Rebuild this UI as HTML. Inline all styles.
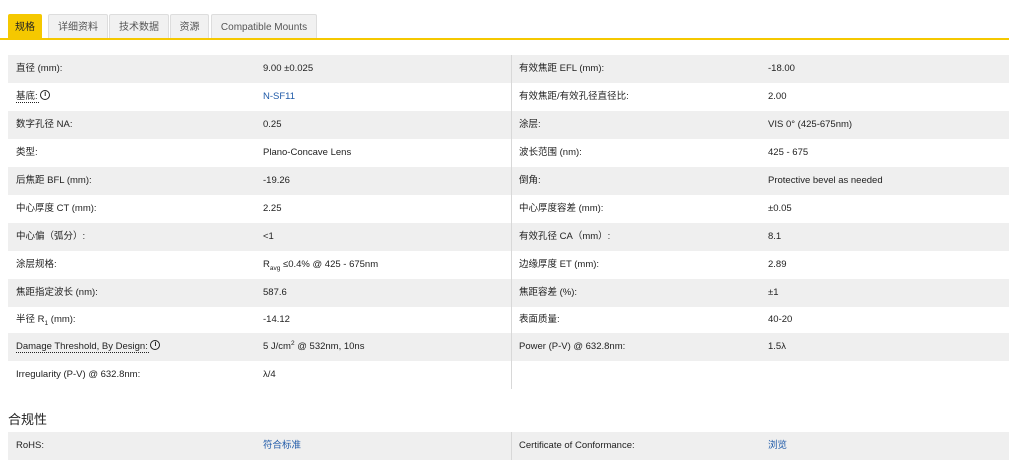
<!DOCTYPE html>
<html><head><meta charset="utf-8"><style>
body{margin:0;background:#fff;font-family:"Liberation Sans","Noto Sans CJK SC",sans-serif;font-size:9.5px;color:#222;width:1009px;height:475px;overflow:hidden;position:relative}
.tabs{position:absolute;left:8px;top:14px;height:24px}
.tab{position:absolute;top:0;height:24px;line-height:25px;box-sizing:border-box;border:1px solid #ddd;border-bottom:none;background:#f1f1f1;color:#555;font-size:10px;text-align:center;border-radius:2px 2px 0 0}
.tab.a{background:#f5c800;border-color:#f5c800;color:#222}
.line{position:absolute;left:0;top:38px;width:1009px;height:2px;background:#f5c800}
.row{position:absolute;left:8px;width:1001px;height:28px;line-height:28px}
.g{background:#efefef}
.row>span{position:absolute;top:0;white-space:nowrap;height:28px}
.c1{left:8px}.c2{left:255px}.c3{left:511px}.c4{left:760px}
.div{position:absolute;left:511px;width:1px;background:#d8d8d8}
a{color:#1f5aa8;text-decoration:none}
.u{text-decoration:underline dotted;text-underline-offset:3px}
.i{display:inline-block;width:8px;height:8px;border:1.3px solid #222;border-radius:50%;font-size:7px;line-height:8px;text-align:center;font-weight:bold;vertical-align:middle;margin-top:-2px}
h3{position:absolute;left:8px;top:409px;margin:0;font-size:13px;font-weight:normal;color:#222}
sub,sup{font-size:6.5px;line-height:0}
</style></head><body>
<div class="tabs">
<div class="tab a" style="left:0;width:34px">规格</div>
<div class="tab" style="left:40px;width:60px">详细资料</div>
<div class="tab" style="left:101px;width:60px">技术数据</div>
<div class="tab" style="left:162px;width:39px">资源</div>
<div class="tab" style="left:203px;width:106px">Compatible Mounts</div>
</div>
<div class="line"></div>

<div class="row g" style="top:55px"><span class="c1">直径 (mm):</span><span class="c2">9.00 ±0.025</span><span class="c3">有效焦距 EFL (mm):</span><span class="c4">-18.00</span></div>
<div class="row" style="top:83px"><span class="c1"><span class="u">基底: </span><span class="i">i</span></span><span class="c2"><a>N-SF11</a></span><span class="c3">有效焦距/有效孔径直径比:</span><span class="c4">2.00</span></div>
<div class="row g" style="top:111px"><span class="c1">数字孔径 NA:</span><span class="c2">0.25</span><span class="c3">涂层:</span><span class="c4">VIS 0° (425-675nm)</span></div>
<div class="row" style="top:139px"><span class="c1">类型:</span><span class="c2">Plano-Concave Lens</span><span class="c3">波长范围 (nm):</span><span class="c4">425 - 675</span></div>
<div class="row g" style="top:167px"><span class="c1">后焦距 BFL (mm):</span><span class="c2">-19.26</span><span class="c3">倒角:</span><span class="c4">Protective bevel as needed</span></div>
<div class="row" style="top:195px"><span class="c1">中心厚度 CT (mm):</span><span class="c2">2.25</span><span class="c3">中心厚度容差 (mm):</span><span class="c4">±0.05</span></div>
<div class="row g" style="top:223px"><span class="c1">中心偏（弧分）:</span><span class="c2">&lt;1</span><span class="c3">有效孔径 CA（mm）:</span><span class="c4">8.1</span></div>
<div class="row" style="top:251px"><span class="c1">涂层规格:</span><span class="c2">R<sub>avg</sub> ≤0.4% @ 425 - 675nm</span><span class="c3">边缘厚度 ET (mm):</span><span class="c4">2.89</span></div>
<div class="row g" style="top:279px"><span class="c1">焦距指定波长 (nm):</span><span class="c2">587.6</span><span class="c3">焦距容差 (%):</span><span class="c4">±1</span></div>
<div class="row" style="top:306px"><span class="c1">半径 R<sub>1</sub> (mm):</span><span class="c2">-14.12</span><span class="c3">表面质量:</span><span class="c4">40-20</span></div>
<div class="row g" style="top:333px"><span class="c1"><span class="u">Damage Threshold, By Design: </span><span class="i">i</span></span><span class="c2">5 J/cm<sup>2</sup> @ 532nm, 10ns</span><span class="c3">Power (P-V) @ 632.8nm:</span><span class="c4">1.5λ</span></div>
<div class="row" style="top:361px"><span class="c1">Irregularity (P-V) @ 632.8nm:</span><span class="c2">λ/4</span></div>
<div class="div" style="top:55px;height:334px"></div>

<h3>合规性</h3>
<div class="row g" style="top:432px"><span class="c1">RoHS:</span><span class="c2"><a>符合标准</a></span><span class="c3">Certificate of Conformance:</span><span class="c4"><a>浏览</a></span></div>
<div class="div" style="top:432px;height:28px"></div>
</body></html>
